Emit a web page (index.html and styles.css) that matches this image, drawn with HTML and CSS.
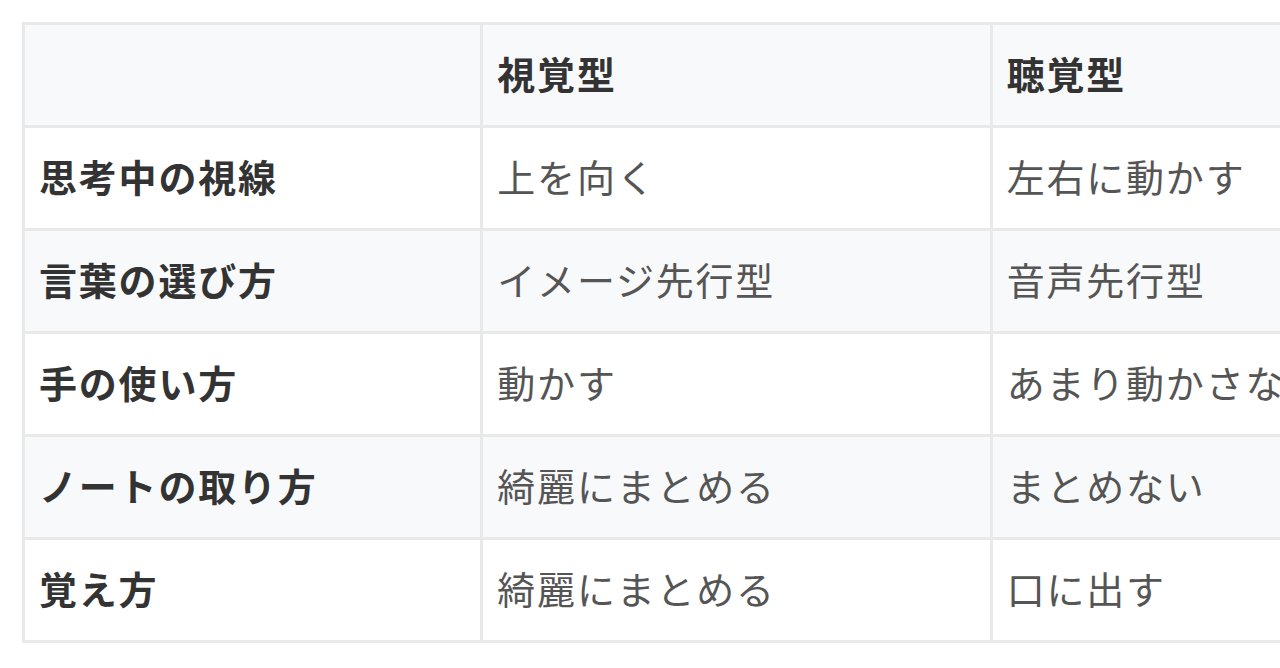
FILE: index.html
```html
<!DOCTYPE html>
<html lang="ja">
<head>
<meta charset="utf-8">
<link rel="stylesheet" href="styles.css">
</head>
<body>
<div class="wrap">
<table class="cmp">
  <colgroup>
    <col class="c1"><col class="c2"><col class="c3">
  </colgroup>
  <thead>
    <tr><th></th><th>視覚型</th><th>聴覚型</th></tr>
  </thead>
  <tbody>
    <tr><th>思考中の視線</th><td>上を向く</td><td>左右に動かす</td></tr>
    <tr class="alt"><th>言葉の選び方</th><td>イメージ先行型</td><td>音声先行型</td></tr>
    <tr><th>手の使い方</th><td>動かす</td><td>あまり動かさない</td></tr>
    <tr class="alt"><th>ノートの取り方</th><td>綺麗にまとめる</td><td>まとめない</td></tr>
    <tr><th>覚え方</th><td>綺麗にまとめる</td><td>口に出す</td></tr>
  </tbody>
</table>
</div>
</body>
</html>
```

FILE: styles.css
```css
html, body {
  margin: 0;
  padding: 0;
  background: #ffffff;
  overflow: hidden;
  width: 1280px;
  height: 668px;
}
.wrap {
  padding: 22px 0 0 22px;
}
.cmp {
  border-collapse: collapse;
  table-layout: fixed;
  width: 1480px;
  font-family: "Noto Sans CJK JP", "Noto Sans", sans-serif;
  font-size: 38px;
  letter-spacing: 1.8px;
  line-height: 40px;
}
.c1 { width: 458px; }
.c2 { width: 509px; }
.c3 { width: 509px; }
.cmp th, .cmp td {
  border: 3px solid #e9e9e9;
  padding: 0 0 5px 14px;
  height: 95px;
  text-align: left;
  vertical-align: middle;
  white-space: nowrap;
  overflow: hidden;
}
.cmp th {
  font-weight: 700;
  color: #333333;
}
.cmp td {
  font-weight: 400;
  color: #555555;
}
.cmp thead tr, .cmp tr.alt {
  background: #f8f9fa;
}
```
